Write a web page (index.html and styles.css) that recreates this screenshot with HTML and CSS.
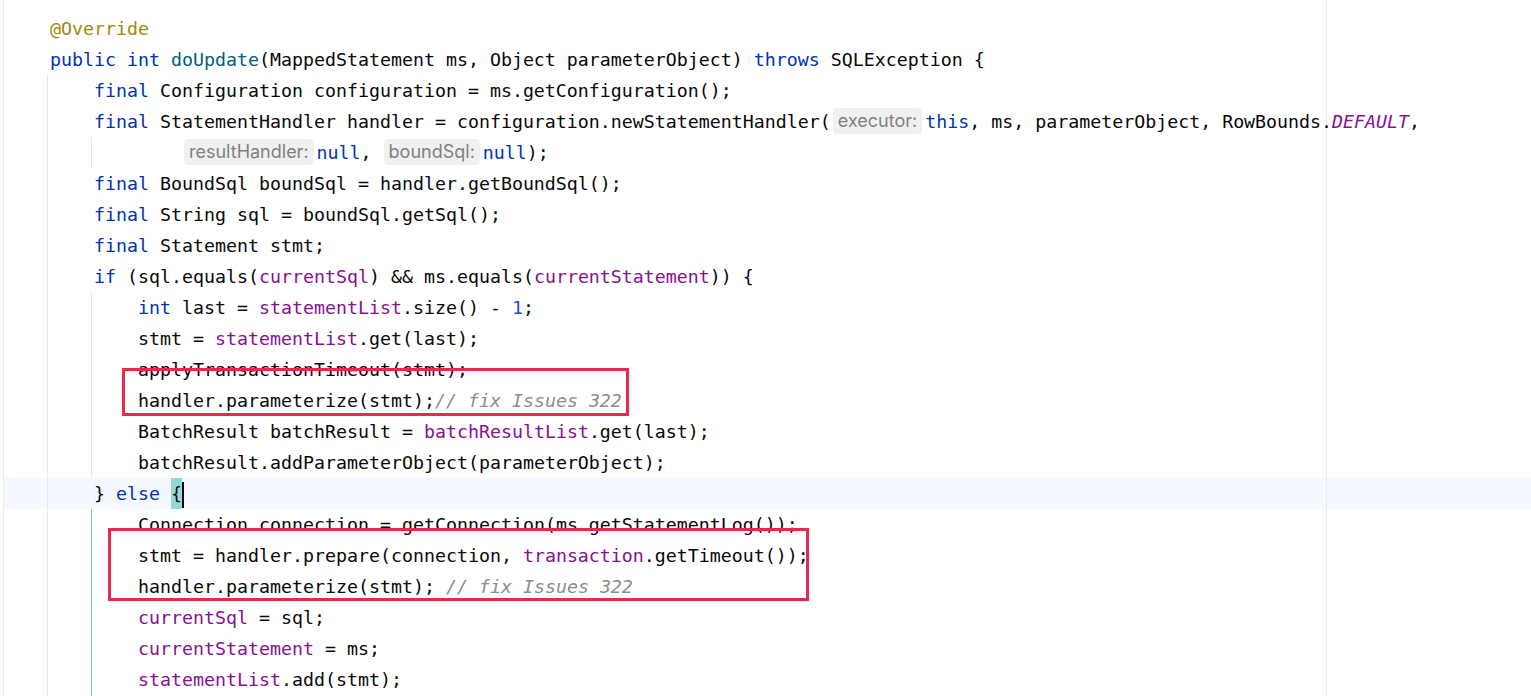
FILE: index.html
```html
<!DOCTYPE html>
<html lang="en">
<head>
<meta charset="utf-8">
<title>BatchExecutor.doUpdate</title>
<link rel="stylesheet" href="styles.css">
</head>
<body>
<div class="editor">
  <div class="line"><span class="code"><span class="an">@Override</span></span></div>
  <div class="line"><span class="code"><span class="kw">public int </span><span class="md">doUpdate</span>(MappedStatement ms, Object parameterObject) <span class="kw">throws</span> SQLException {</span></div>
  <div class="line"><span class="ind g"></span><span class="code"><span class="kw">final</span> Configuration configuration = ms.getConfiguration();</span></div>
  <div class="line"><span class="ind g"></span><span class="code"><span class="kw">final</span> StatementHandler handler = configuration.newStatementHandler(<span class="hint h-lead">executor:</span><span class="kw">this</span>, ms, parameterObject, RowBounds.<span class="sf">DEFAULT</span>,</span></div>
  <div class="line"><span class="ind g"></span><span class="ind g"></span><span class="ind"></span><span class="code"><span class="hint h-lead">resultHandler:</span><span class="kw">null</span>, <span class="hint">boundSql:</span><span class="kw">null</span>);</span></div>
  <div class="line"><span class="ind g"></span><span class="code"><span class="kw">final</span> BoundSql boundSql = handler.getBoundSql();</span></div>
  <div class="line"><span class="ind g"></span><span class="code"><span class="kw">final</span> String sql = boundSql.getSql();</span></div>
  <div class="line"><span class="ind g"></span><span class="code"><span class="kw">final</span> Statement stmt;</span></div>
  <div class="line"><span class="ind g"></span><span class="code"><span class="kw">if</span> (sql.equals(<span class="fd">currentSql</span>) &amp;&amp; ms.equals(<span class="fd">currentStatement</span>)) {</span></div>
  <div class="line"><span class="ind g"></span><span class="ind g"></span><span class="code"><span class="kw">int</span> last = <span class="fd">statementList</span>.size() - <span class="nm">1</span>;</span></div>
  <div class="line"><span class="ind g"></span><span class="ind g"></span><span class="code">stmt = <span class="fd">statementList</span>.get(last);</span></div>
  <div class="line"><span class="ind g"></span><span class="ind g"></span><span class="code">applyTransactionTimeout(stmt);</span></div>
  <div class="line"><span class="ind g"></span><span class="ind g"></span><span class="code">handler.parameterize(stmt);<span class="cm">// fix Issues 322</span></span></div>
  <div class="line"><span class="ind g"></span><span class="ind g"></span><span class="code">BatchResult batchResult = <span class="fd">batchResultList</span>.get(last);</span></div>
  <div class="line"><span class="ind g"></span><span class="ind g"></span><span class="code">batchResult.addParameterObject(parameterObject);</span></div>
  <div class="line current"><span class="ind g"></span><span class="code">} <span class="kw">else</span> <span class="brace">{</span><span class="caret"></span></span></div>
  <div class="line"><span class="ind g"></span><span class="ind g sel"></span><span class="code">Connection connection = getConnection(ms.getStatementLog());</span></div>
  <div class="line"><span class="ind g"></span><span class="ind g sel"></span><span class="code">stmt = handler.prepare(connection, <span class="fd">transaction</span>.getTimeout());</span></div>
  <div class="line"><span class="ind g"></span><span class="ind g sel"></span><span class="code">handler.parameterize(stmt); <span class="cm">// fix Issues 322</span></span></div>
  <div class="line"><span class="ind g"></span><span class="ind g sel"></span><span class="code"><span class="fd">currentSql</span> = sql;</span></div>
  <div class="line"><span class="ind g"></span><span class="ind g sel"></span><span class="code"><span class="fd">currentStatement</span> = ms;</span></div>
  <div class="line"><span class="ind g"></span><span class="ind g sel"></span><span class="code"><span class="fd">statementList</span>.add(stmt);</span></div>
  <div class="line"><span class="ind g"></span><span class="ind g sel"></span></div>

  <div class="mark mark-a"></div>
  <div class="mark mark-b"></div>
</div>
</body>
</html>
```

FILE: styles.css
```css
html, body {
  margin: 0;
  padding: 0;
  background: #ffffff;
  overflow: hidden;
}

.editor {
  position: relative;
  margin-left: 3px;
  border-left: 1px solid #ebebeb;
  padding-top: 13px;
  height: 696px;
  box-sizing: border-box;
  background: linear-gradient(to right, transparent 1322px, #ebebeb 1322px, #ebebeb 1323px, transparent 1323px);
  font-family: "DejaVu Sans Mono", "Liberation Mono", monospace;
  font-size: 18.27px;
  color: #080808;
}

.line {
  display: flex;
  height: 31px;
  line-height: 31px;
  padding-left: 43px;
  white-space: pre;
}

.line.current {
  background:
    linear-gradient(to right, transparent 1322px, #ebebeb 1322px, #ebebeb 1323px, transparent 1323px),
    #f5f8fe;
}

.ind {
  flex: none;
  width: 44px;
  height: 31px;
}

.ind.g {
  background: linear-gradient(to right, #e8e8e8 0, #e8e8e8 1px, transparent 1px);
}

.ind.g.sel {
  background: linear-gradient(to right, #7fbfbd 0, #7fbfbd 1px, transparent 1px);
}

.code {
  display: block;
  margin-left: 3px;
  height: 31px;
}

.kw { color: #0033b3; }
.md { color: #00627a; }
.an { color: #9e880d; }
.fd { color: #871094; }
.sf { color: #871094; font-style: italic; }
.nm { color: #1750eb; }
.cm { color: #8c8c8c; font-style: italic; }

.hint {
  display: inline-block;
  vertical-align: top;
  height: 26px;
  line-height: 26px;
  margin: 2px 3px 0 1px;
  padding: 0 5px;
  border-radius: 4px;
  background: #f0f0f0;
  color: #808080;
  font-family: Inter, "Noto Sans", sans-serif;
  font-size: 18px;
  font-style: normal;
}

.h-lead {
  margin-left: 2px;
}

.brace {
  display: inline-block;
  vertical-align: top;
  height: 31px;
  line-height: 31px;
  background: #93d9d9;
}

.caret {
  display: inline-block;
  vertical-align: top;
  width: 2px;
  height: 26px;
  margin-top: 4px;
  background: #000000;
}

.mark {
  position: absolute;
  border: 3px solid #e8284d;
  box-sizing: border-box;
}

.mark-a {
  left: 118px;
  top: 368px;
  width: 507px;
  height: 48px;
}

.mark-b {
  left: 104px;
  top: 528px;
  width: 701px;
  height: 73px;
}
```
